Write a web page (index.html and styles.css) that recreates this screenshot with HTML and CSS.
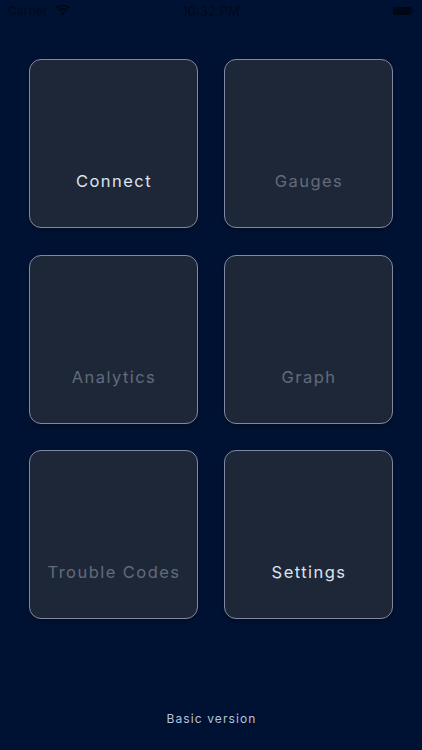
FILE: index.html
```html
<!DOCTYPE html>
<html lang="en">
<head>
<meta charset="utf-8">
<title>Home</title>
<link rel="stylesheet" href="styles.css">
</head>
<body>
<div class="screen">
  <header class="status">
    <div class="status-left">
      <span class="carrier">Carrier</span>
      <svg class="wifi" viewBox="0 0 16 12"><path d="M8 11.6 5.6 8.9a3.4 3.4 0 0 1 4.8 0zM3.9 7.2 2.3 5.4a8 8 0 0 1 11.4 0l-1.6 1.8a5.8 5.8 0 0 0-8.2 0zM1.2 4.2 0 2.8a11.2 11.2 0 0 1 16 0l-1.2 1.4a9.6 9.6 0 0 0-13.6 0z"/></svg>
    </div>
    <span class="time">10:32 PM</span>
    <div class="status-right"><span class="battery"></span><span class="nub"></span></div>
  </header>
  <main class="grid">
    <div class="tile"><span class="label on">Connect</span></div>
    <div class="tile"><span class="label">Gauges</span></div>
    <div class="tile"><span class="label">Analytics</span></div>
    <div class="tile"><span class="label">Graph</span></div>
    <div class="tile"><span class="label">Trouble Codes</span></div>
    <div class="tile"><span class="label on">Settings</span></div>
  </main>
  <footer class="version">Basic version</footer>
</div>
</body>
</html>
```
FILE: styles.css
```css
* { box-sizing: border-box; }
html, body { margin: 0; height: 100%; }
body { background: #001233; font-family: Inter, "Liberation Sans", sans-serif; overflow: hidden; }
.screen { width: 422px; height: 750px; display: flex; flex-direction: column; }
.status {
  height: 21px;
  padding: 0 8px;
  display: grid;
  grid-template-columns: 1fr auto 1fr;
  align-items: center;
  color: #000a1e;
  font-size: 13px;
  font-weight: 500;
}
.status-left { display: flex; align-items: center; gap: 7px; }
.carrier { font-size: 12px; }
.wifi { width: 15px; height: 11px; fill: #000817; }
.status-right { display: flex; align-items: center; justify-content: flex-end; gap: 1px; }
.battery { width: 19px; height: 8px; background: #000817; border-radius: 2px; }
.nub { width: 1px; height: 4px; background: #000817; }
.grid {
  margin-top: 38px;
  padding: 0 29px;
  display: grid;
  grid-template-columns: 169px 169px;
  grid-auto-rows: 169px;
  column-gap: 26px;
  row-gap: 26.5px;
}
.tile {
  background: #1e2738;
  border: 1px solid #8089a3;
  border-radius: 12px;
  box-shadow: 0 2px 5px rgba(0, 0, 0, .3);
  padding: 111px 0 0 1px;
  text-align: center;
}
.label {
  display: block;
  font-size: 16.5px;
  line-height: 20px;
  font-weight: 400;
  letter-spacing: 1.45px;
  color: #626b7c;
}
.label.on { color: #dfe3ec; }
.version {
  margin-top: auto;
  margin-bottom: 24px;
  padding-left: 1px;
  text-align: center;
  font-size: 12px;
  line-height: 15px;
  letter-spacing: 1.1px;
  color: #b9c2d4;
}
```
